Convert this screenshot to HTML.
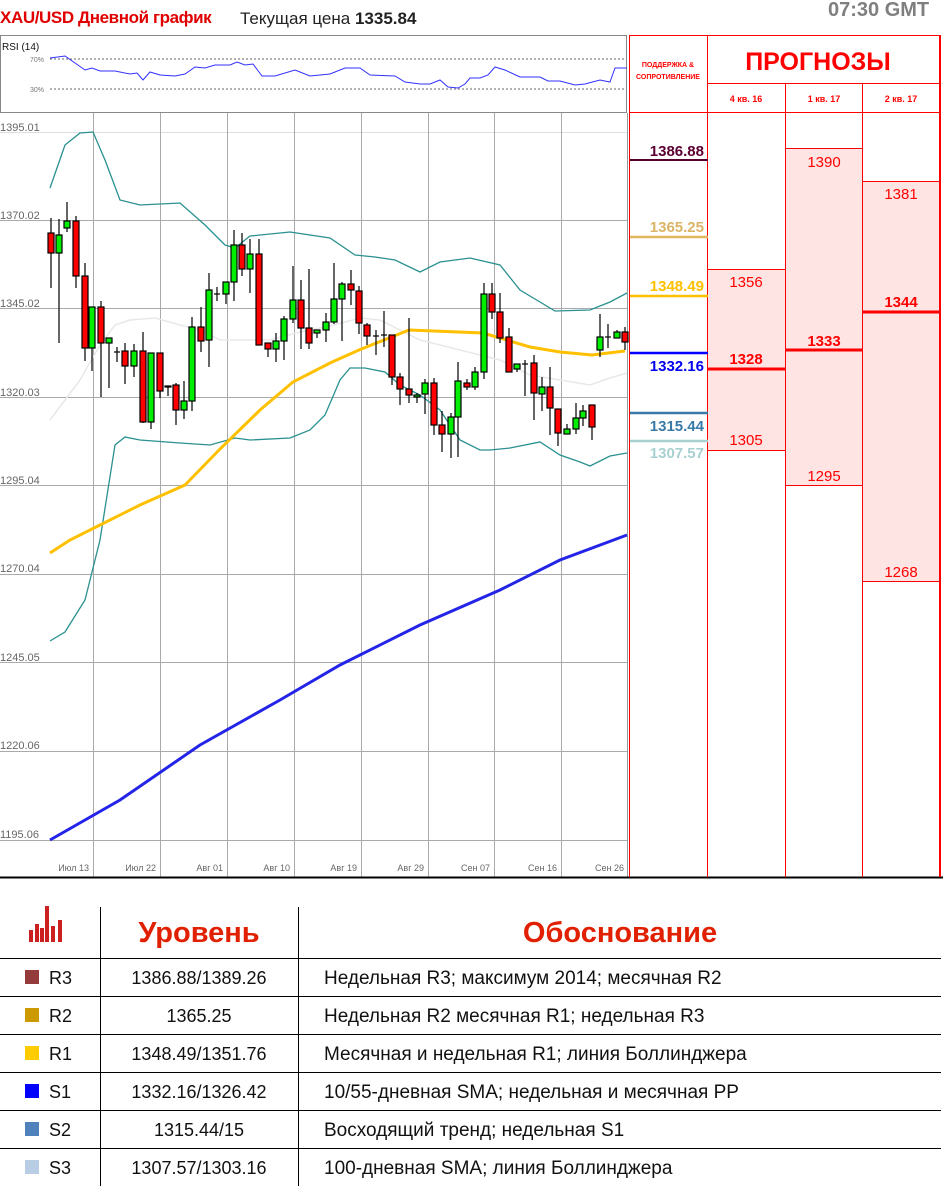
<!DOCTYPE html>
<html><head><meta charset="utf-8"><style>
html,body{margin:0;padding:0;background:#fff;width:951px;height:1192px;overflow:hidden;font-family:"Liberation Sans","DejaVu Sans",sans-serif;}
.abs{position:absolute;}
</style></head><body>
<div class="abs" style="left:0;top:8px;font-size:17px;font-weight:bold;color:#e00000;letter-spacing:-0.4px;">XAU/USD Дневной график</div>
<div class="abs" style="left:240px;top:9px;font-size:17px;color:#222;">Текущая цена <b>1335.84</b></div>
<div class="abs" style="left:828px;top:-1px;font-size:20px;font-weight:bold;color:#7f7f7f;">07:30 GMT</div>

<svg class="abs" style="left:0;top:0" width="951" height="1192" xmlns="http://www.w3.org/2000/svg">
<rect x="0.5" y="35.5" width="626" height="77" fill="none" stroke="#888"/>
<text x="2" y="50" font-size="10" fill="#111" font-family="Liberation Sans">RSI (14)</text>
<text x="30" y="62" font-size="7" fill="#777" font-family="Liberation Sans">70%</text>
<text x="30" y="92" font-size="7" fill="#777" font-family="Liberation Sans">30%</text>
<line x1="50" y1="59" x2="626" y2="59" stroke="#666" stroke-dasharray="2,2"/>
<line x1="50" y1="89" x2="626" y2="89" stroke="#666" stroke-dasharray="2,2"/>
<polyline fill="none" stroke="#3030ff" stroke-width="1" points="50,58 65,56 85,70 92,68 100,71 115,71 130,74 137,73 143,80 150,72 160,75 175,76 185,74 195,67 205,68 215,65 230,65 237,62 245,65 253,64 262,76 275,76 295,70 310,76 330,74 345,68 360,68 370,75 395,76 405,82 420,84 430,84 440,80 448,87 458,88 465,84 470,78 480,78 488,75 495,67 505,70 520,77 540,77 548,81 560,81 575,85 585,84 600,80 610,82 615,68 627,68"/>

<line x1="627.5" y1="113" x2="627.5" y2="877" stroke="#999"/>
<g stroke="#aaa" stroke-width="1">
<line x1="0" y1="220.5" x2="627" y2="220.5"/><line x1="0" y1="308.5" x2="627" y2="308.5"/>
<line x1="0" y1="397.5" x2="627" y2="397.5"/><line x1="0" y1="485.5" x2="627" y2="485.5"/>
<line x1="0" y1="574.5" x2="627" y2="574.5"/><line x1="0" y1="662.5" x2="627" y2="662.5"/>
<line x1="0" y1="751.5" x2="627" y2="751.5"/><line x1="0" y1="840.5" x2="627" y2="840.5"/>
<line x1="0" y1="132.5" x2="627" y2="132.5" stroke="#ddd"/>
<line x1="93.5" y1="113" x2="93.5" y2="877"/><line x1="160.5" y1="113" x2="160.5" y2="877"/>
<line x1="227.5" y1="113" x2="227.5" y2="877"/><line x1="294.5" y1="113" x2="294.5" y2="877"/>
<line x1="361.5" y1="113" x2="361.5" y2="877"/><line x1="428.5" y1="113" x2="428.5" y2="877"/>
<line x1="494.5" y1="113" x2="494.5" y2="877"/><line x1="561.5" y1="113" x2="561.5" y2="877"/>
</g>
<g font-size="11" fill="#666" font-family="Liberation Sans">
<text x="0" y="131">1395.01</text><text x="0" y="219">1370.02</text><text x="0" y="307">1345.02</text>
<text x="0" y="396">1320.03</text><text x="0" y="484">1295.04</text><text x="0" y="572">1270.04</text>
<text x="0" y="661">1245.05</text><text x="0" y="749">1220.06</text><text x="0" y="838">1195.06</text>
</g>
<g font-size="9" fill="#666" font-family="Liberation Sans" text-anchor="end">
<text x="89" y="871">Июл 13</text><text x="156" y="871">Июл 22</text><text x="223" y="871">Авг 01</text>
<text x="290" y="871">Авг 10</text><text x="357" y="871">Авг 19</text><text x="424" y="871">Авг 29</text>
<text x="490" y="871">Сен 07</text><text x="557" y="871">Сен 16</text><text x="624" y="871">Сен 26</text>
</g>
<line x1="0" y1="877.5" x2="943" y2="877.5" stroke="#000" stroke-width="2"/>

<polyline fill="none" stroke="#e8e8e8" stroke-width="1.5" points="50,420 80,380 100,345 115,325 130,320 155,318 180,325 200,330 220,340 245,340 270,340 300,332 330,326 360,318 380,320 420,340 460,350 500,360 530,375 560,380 590,385 610,378 627,373"/>
<polyline fill="none" stroke="#2a9090" stroke-width="1.3" points="50,188 65,145 80,133 93,132 105,160 120,200 140,205 180,203 205,225 225,245 235,248 250,236 290,232 330,238 355,255 375,257 395,260 420,272 440,262 470,258 500,265 520,290 545,305 555,311 590,310 610,302 627,293"/>
<polyline fill="none" stroke="#2a9090" stroke-width="1.3" points="50,641 65,632 85,600 100,540 115,445 125,437 140,440 180,443 210,445 235,438 250,440 290,438 310,430 325,415 340,380 350,368 365,368 385,372 400,385 420,395 440,410 460,440 480,450 490,450 510,448 540,442 560,455 580,462 590,466 610,456 627,453"/>
<polyline fill="none" stroke="#2424e8" stroke-width="3" points="50,840 120,800 200,745 280,700 340,665 420,625 500,590 560,560 627,535"/>
<polyline fill="none" stroke="#ffc000" stroke-width="3" points="50,553 70,540 100,525 140,505 185,485 220,449 260,410 293,382 330,363 359,350 409,330 483,333 530,347 560,352 592,355 625,351"/>

<g stroke="#000" stroke-width="1.2">
<line x1="51" y1="218" x2="51" y2="288"/><rect x="48" y="233" width="6" height="20" fill="#f00"/>
<line x1="59" y1="219" x2="59" y2="343"/><rect x="56" y="235" width="6" height="18" fill="#0e0"/>
<line x1="67" y1="202" x2="67" y2="232"/><rect x="64" y="221" width="6" height="7" fill="#0e0"/>
<line x1="76" y1="216" x2="76" y2="288"/><rect x="73" y="221" width="6" height="55" fill="#f00"/>
<line x1="85" y1="263" x2="85" y2="361"/><rect x="82" y="276" width="6" height="72" fill="#f00"/>
<line x1="92" y1="307" x2="92" y2="371"/><rect x="89" y="307" width="6" height="41" fill="#0e0"/>
<line x1="101" y1="301" x2="101" y2="397"/><rect x="98" y="307" width="6" height="36" fill="#f00"/>
<line x1="109" y1="338" x2="109" y2="388"/><rect x="106" y="338" width="6" height="5" fill="#0e0"/>
<line x1="117" y1="347" x2="117" y2="362"/><line x1="114" y1="352" x2="120" y2="352"/>
<line x1="125" y1="343" x2="125" y2="384"/><rect x="122" y="351" width="6" height="15" fill="#f00"/>
<line x1="134" y1="344" x2="134" y2="377"/><rect x="131" y="351" width="6" height="15" fill="#0e0"/>
<line x1="143" y1="332" x2="143" y2="423"/><rect x="140" y="351" width="6" height="71" fill="#f00"/>
<line x1="151" y1="353" x2="151" y2="429"/><rect x="148" y="353" width="6" height="69" fill="#0e0"/>
<line x1="160" y1="353" x2="160" y2="398"/><rect x="157" y="353" width="6" height="38" fill="#f00"/>
<line x1="168" y1="386" x2="168" y2="396"/><rect x="165" y="386" width="6" height="1" fill="#0e0"/>
<line x1="176" y1="383" x2="176" y2="425"/><rect x="173" y="385" width="6" height="25" fill="#f00"/>
<line x1="184" y1="381" x2="184" y2="419"/><rect x="181" y="401" width="6" height="9" fill="#0e0"/>
<line x1="192" y1="317" x2="192" y2="411"/><rect x="189" y="327" width="6" height="74" fill="#0e0"/>
<line x1="201" y1="307" x2="201" y2="352"/><rect x="198" y="327" width="6" height="14" fill="#f00"/>
<line x1="209" y1="273" x2="209" y2="367"/><rect x="206" y="290" width="6" height="50" fill="#0e0"/>
<line x1="217" y1="287" x2="217" y2="301"/><line x1="214" y1="294" x2="220" y2="294"/>
<line x1="226" y1="282" x2="226" y2="304"/><rect x="223" y="282" width="6" height="12" fill="#0e0"/>
<line x1="234" y1="230" x2="234" y2="301"/><rect x="231" y="245" width="6" height="37" fill="#0e0"/>
<line x1="242" y1="233" x2="242" y2="276"/><rect x="239" y="245" width="6" height="24" fill="#f00"/>
<line x1="250" y1="239" x2="250" y2="293"/><rect x="247" y="254" width="6" height="15" fill="#0e0"/>
<line x1="259" y1="239" x2="259" y2="345"/><rect x="256" y="254" width="6" height="91" fill="#f00"/>
<line x1="268" y1="343" x2="268" y2="357"/><rect x="265" y="343" width="6" height="6" fill="#f00"/>
<line x1="276" y1="333" x2="276" y2="362"/><rect x="273" y="341" width="6" height="8" fill="#0e0"/>
<line x1="284" y1="316" x2="284" y2="360"/><rect x="281" y="319" width="6" height="22" fill="#0e0"/>
<line x1="293" y1="266" x2="293" y2="323"/><rect x="290" y="300" width="6" height="19" fill="#0e0"/>
<line x1="301" y1="280" x2="301" y2="349"/><rect x="298" y="300" width="6" height="28" fill="#f00"/>
<line x1="309" y1="269" x2="309" y2="349"/><rect x="306" y="328" width="6" height="15" fill="#f00"/>
<line x1="317" y1="330" x2="317" y2="338"/><rect x="314" y="330" width="6" height="3" fill="#0e0"/>
<line x1="326" y1="313" x2="326" y2="342"/><rect x="323" y="322" width="6" height="8" fill="#0e0"/>
<line x1="334" y1="263" x2="334" y2="324"/><rect x="331" y="299" width="6" height="23" fill="#0e0"/>
<line x1="342" y1="282" x2="342" y2="341"/><rect x="339" y="284" width="6" height="15" fill="#0e0"/>
<line x1="351" y1="270" x2="351" y2="305"/><rect x="348" y="284" width="6" height="6" fill="#f00"/>
<line x1="359" y1="286" x2="359" y2="334"/><rect x="356" y="291" width="6" height="32" fill="#f00"/>
<line x1="367" y1="323" x2="367" y2="345"/><rect x="364" y="325" width="6" height="11" fill="#f00"/>
<line x1="376" y1="330" x2="376" y2="355"/><line x1="373" y1="336" x2="379" y2="336"/>
<line x1="384" y1="311" x2="384" y2="347"/><line x1="381" y1="335" x2="387" y2="335"/>
<line x1="392" y1="335" x2="392" y2="385"/><rect x="389" y="335" width="6" height="42" fill="#f00"/>
<line x1="400" y1="373" x2="400" y2="405"/><rect x="397" y="377" width="6" height="12" fill="#f00"/>
<line x1="409" y1="318" x2="409" y2="403"/><rect x="406" y="389" width="6" height="6" fill="#f00"/>
<line x1="417" y1="393" x2="417" y2="403"/><rect x="414" y="395" width="6" height="2" fill="#0e0"/>
<line x1="425" y1="379" x2="425" y2="414"/><rect x="422" y="383" width="6" height="11" fill="#0e0"/>
<line x1="434" y1="378" x2="434" y2="435"/><rect x="431" y="383" width="6" height="42" fill="#f00"/>
<line x1="442" y1="411" x2="442" y2="452"/><rect x="439" y="425" width="6" height="9" fill="#f00"/>
<line x1="451" y1="413" x2="451" y2="458"/><rect x="448" y="417" width="6" height="17" fill="#0e0"/>
<line x1="458" y1="362" x2="458" y2="457"/><rect x="455" y="381" width="6" height="36" fill="#0e0"/>
<line x1="467" y1="379" x2="467" y2="390"/><rect x="464" y="383" width="6" height="4" fill="#f00"/>
<line x1="475" y1="367" x2="475" y2="390"/><rect x="472" y="372" width="6" height="15" fill="#0e0"/>
<line x1="484" y1="283" x2="484" y2="379"/><rect x="481" y="294" width="6" height="78" fill="#0e0"/>
<line x1="492" y1="283" x2="492" y2="319"/><rect x="489" y="294" width="6" height="18" fill="#f00"/>
<line x1="500" y1="293" x2="500" y2="343"/><rect x="497" y="312" width="6" height="26" fill="#f00"/>
<line x1="509" y1="328" x2="509" y2="372"/><rect x="506" y="337" width="6" height="35" fill="#f00"/>
<line x1="517" y1="364" x2="517" y2="372"/><rect x="514" y="364" width="6" height="5" fill="#0e0"/>
<line x1="525" y1="360" x2="525" y2="396"/><line x1="522" y1="364" x2="528" y2="364"/>
<line x1="534" y1="355" x2="534" y2="420"/><rect x="531" y="363" width="6" height="30" fill="#f00"/>
<line x1="542" y1="377" x2="542" y2="411"/><rect x="539" y="387" width="6" height="7" fill="#0e0"/>
<line x1="550" y1="367" x2="550" y2="435"/><rect x="547" y="387" width="6" height="21" fill="#f00"/>
<line x1="558" y1="409" x2="558" y2="446"/><rect x="555" y="409" width="6" height="24" fill="#f00"/>
<line x1="567" y1="424" x2="567" y2="434"/><rect x="564" y="429" width="6" height="5" fill="#0e0"/>
<line x1="576" y1="403" x2="576" y2="434"/><rect x="573" y="418" width="6" height="11" fill="#0e0"/>
<line x1="583" y1="405" x2="583" y2="426"/><rect x="580" y="411" width="6" height="7" fill="#0e0"/>
<line x1="592" y1="405" x2="592" y2="440"/><rect x="589" y="405" width="6" height="22" fill="#f00"/>
<line x1="600" y1="314" x2="600" y2="357"/><rect x="597" y="337" width="6" height="13" fill="#0e0"/>
<line x1="608" y1="324" x2="608" y2="348"/><line x1="605" y1="337" x2="611" y2="337"/>
<line x1="617" y1="330" x2="617" y2="338"/><rect x="614" y="332" width="6" height="6" fill="#0e0"/>
<line x1="625" y1="327" x2="625" y2="350"/><rect x="622" y="332" width="6" height="10" fill="#f00"/>
</g>

<rect x="708" y="269" width="78" height="182" fill="#ffe4e4"/>
<rect x="786" y="149" width="77" height="336" fill="#ffe4e4"/>
<rect x="863" y="181" width="77" height="400" fill="#ffe4e4"/>
<g stroke="#f00" stroke-width="1">
<line x1="707.5" y1="269.5" x2="786" y2="269.5"/><line x1="707.5" y1="450.5" x2="786" y2="450.5"/>
<line x1="786" y1="148.5" x2="863" y2="148.5"/><line x1="786" y1="485.5" x2="863" y2="485.5"/>
<line x1="863" y1="181.5" x2="940" y2="181.5"/><line x1="863" y1="581.5" x2="940" y2="581.5"/>
<line x1="629.5" y1="35" x2="629.5" y2="877"/>
<line x1="707.5" y1="35" x2="707.5" y2="877"/>
<line x1="785.5" y1="83" x2="785.5" y2="877"/>
<line x1="862.5" y1="83" x2="862.5" y2="877"/>
<line x1="629" y1="35.5" x2="941" y2="35.5"/>
<line x1="707" y1="83.5" x2="941" y2="83.5"/>
<line x1="629" y1="112.5" x2="941" y2="112.5"/>
</g>
<line x1="940" y1="35" x2="940" y2="877" stroke="#f00" stroke-width="2"/>
<line x1="708" y1="369" x2="786" y2="369" stroke="#f00" stroke-width="3"/>
<line x1="786" y1="350" x2="863" y2="350" stroke="#f00" stroke-width="3"/>
<line x1="863" y1="312" x2="940" y2="312" stroke="#f00" stroke-width="3"/>
<g font-family="Liberation Sans" fill="#f00" text-anchor="middle">
<text x="668" y="67" font-size="7" font-weight="bold">ПОДДЕРЖКА &amp;</text>
<text x="668" y="79" font-size="7" font-weight="bold">СОПРОТИВЛЕНИЕ</text>
<text x="818" y="70" font-size="25" font-weight="bold">ПРОГНОЗЫ</text>
<text x="746" y="102" font-size="9" font-weight="bold">4 кв. 16</text>
<text x="824" y="102" font-size="9" font-weight="bold">1 кв. 17</text>
<text x="901" y="102" font-size="9" font-weight="bold">2 кв. 17</text>
<text x="746" y="287" font-size="15">1356</text>
<text x="746" y="364" font-size="15" font-weight="bold">1328</text>
<text x="746" y="445" font-size="15">1305</text>
<text x="824" y="167" font-size="15">1390</text>
<text x="824" y="346" font-size="15" font-weight="bold">1333</text>
<text x="824" y="481" font-size="15">1295</text>
<text x="901" y="199" font-size="15">1381</text>
<text x="901" y="307" font-size="15" font-weight="bold">1344</text>
<text x="901" y="577" font-size="15">1268</text>
</g>
<line x1="630" y1="160" x2="708" y2="160" stroke="#5a0030" stroke-width="2"/>
<line x1="630" y1="237" x2="708" y2="237" stroke="#e0b860" stroke-width="2.5"/>
<line x1="630" y1="296" x2="708" y2="296" stroke="#ffc000" stroke-width="2.5"/>
<line x1="630" y1="353" x2="708" y2="353" stroke="#0000ff" stroke-width="2.5"/>
<line x1="630" y1="413" x2="708" y2="413" stroke="#3a7aa8" stroke-width="2.5"/>
<line x1="630" y1="441" x2="708" y2="441" stroke="#a8d0d0" stroke-width="2.5"/>
<g font-family="Liberation Sans" font-weight="bold" font-size="15" text-anchor="end">
<text x="704" y="156" fill="#5a0030">1386.88</text>
<text x="704" y="232" fill="#dbb566">1365.25</text>
<text x="704" y="291" fill="#ffc000">1348.49</text>
<text x="704" y="371" fill="#0000ee">1332.16</text>
<text x="704" y="431" fill="#3a7aa8">1315.44</text>
<text x="704" y="458" fill="#a8d0d0">1307.57</text>
</g>

<g stroke="#000" stroke-width="1">
<line x1="100.5" y1="907" x2="100.5" y2="1186"/>
<line x1="298.5" y1="907" x2="298.5" y2="1186"/>
<line x1="0" y1="958.5" x2="941" y2="958.5"/>
<line x1="0" y1="996.5" x2="941" y2="996.5"/>
<line x1="0" y1="1034.5" x2="941" y2="1034.5"/>
<line x1="0" y1="1072.5" x2="941" y2="1072.5"/>
<line x1="0" y1="1110.5" x2="941" y2="1110.5"/>
<line x1="0" y1="1148.5" x2="941" y2="1148.5"/>
</g>
<g fill="#cc2020">
<rect x="29" y="930" width="4" height="12"/><rect x="35" y="924" width="4" height="18"/>
<rect x="45" y="906" width="4" height="36"/><rect x="51" y="926" width="4" height="16"/>
<rect x="58" y="920" width="4" height="22"/><rect x="40" y="928" width="4" height="14"/>
</g>
<g font-family="Liberation Sans" font-weight="bold" font-size="29" fill="#e02000" text-anchor="middle">
<text x="199" y="942">Уровень</text>
<text x="620" y="942">Обоснование</text>
</g>
<rect x="25" y="970" width="14" height="14" fill="#943c3c"/>
<rect x="25" y="1008" width="14" height="14" fill="#cc9900"/>
<rect x="25" y="1046" width="14" height="14" fill="#ffcc00"/>
<rect x="25" y="1084" width="14" height="14" fill="#0000ff"/>
<rect x="25" y="1122" width="14" height="14" fill="#4f81bd"/>
<rect x="25" y="1160" width="14" height="14" fill="#b8cce4"/>
<g font-family="Liberation Sans" font-size="18" fill="#111">
<text x="49" y="984">R3</text><text x="49" y="1022">R2</text><text x="49" y="1060">R1</text>
<text x="49" y="1098">S1</text><text x="49" y="1136">S2</text><text x="49" y="1174">S3</text>
<g text-anchor="middle">
<text x="199" y="984">1386.88/1389.26</text><text x="199" y="1022">1365.25</text>
<text x="199" y="1060">1348.49/1351.76</text><text x="199" y="1098">1332.16/1326.42</text>
<text x="199" y="1136">1315.44/15</text><text x="199" y="1174">1307.57/1303.16</text>
</g>
<g font-size="19">
<text x="324" y="984">Недельная R3; максимум 2014; месячная R2</text>
<text x="324" y="1022">Недельная R2  месячная R1; недельная R3</text>
<text x="324" y="1060">Месячная и недельная R1; линия Боллинджера</text>
<text x="324" y="1098">10/55-дневная SMA; недельная и месячная PP</text>
<text x="324" y="1136">Восходящий тренд; недельная S1</text>
<text x="324" y="1174">100-дневная SMA; линия Боллинджера</text>
</g>
</g>
</svg>
</body></html>
